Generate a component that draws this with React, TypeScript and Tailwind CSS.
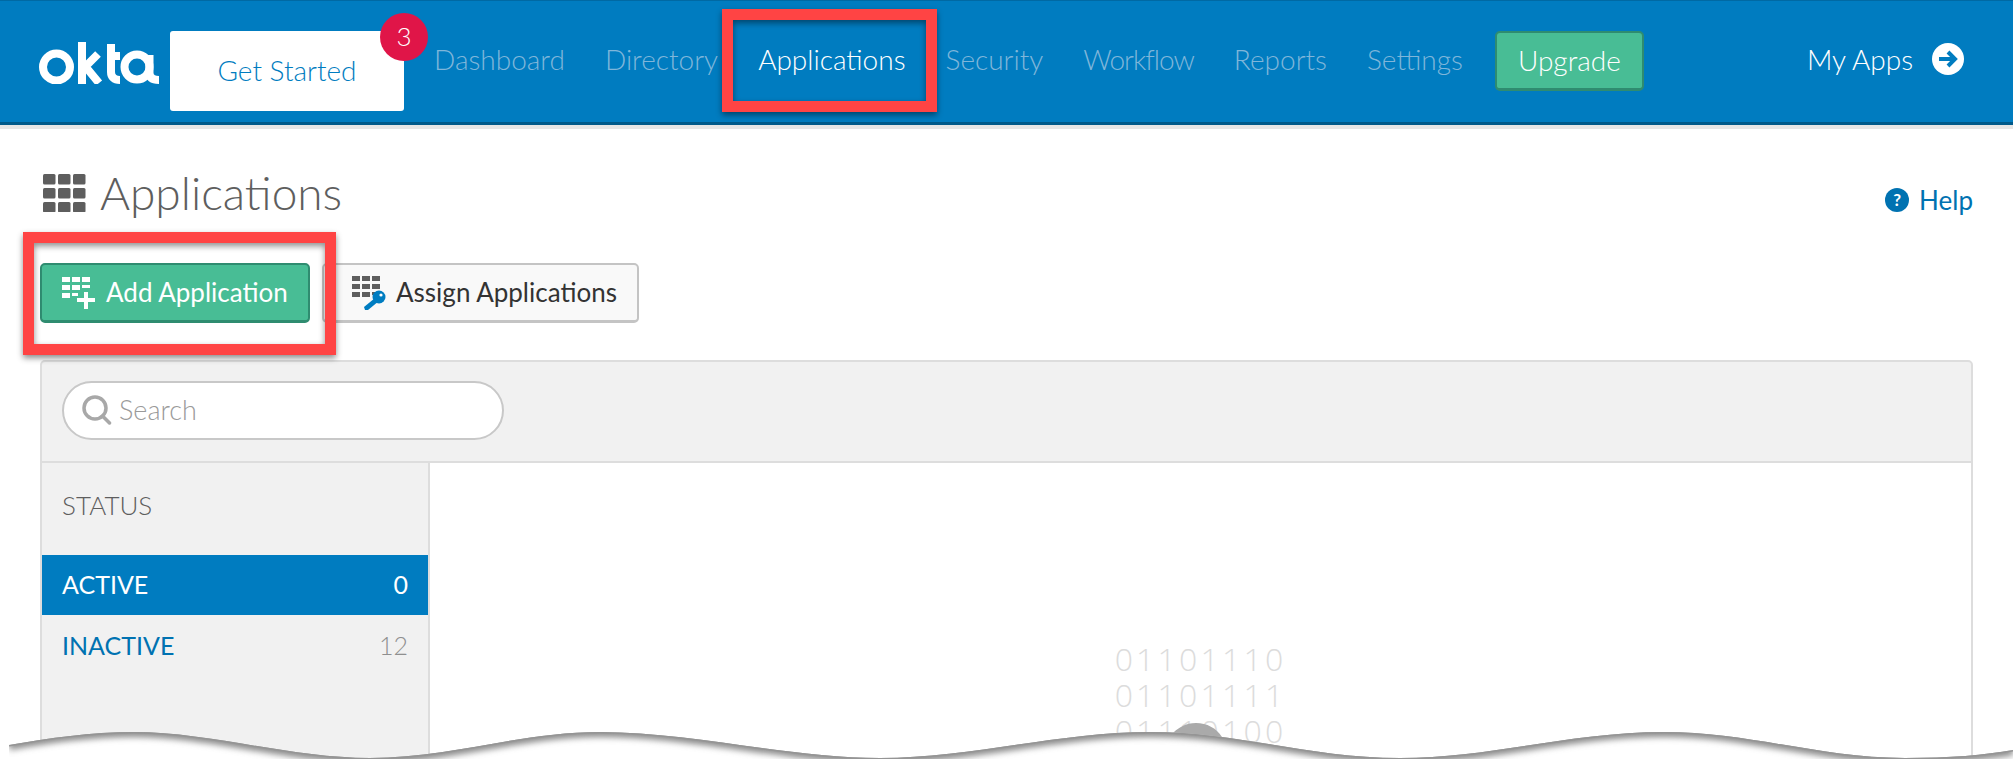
import React from "react";

const NAV_ITEMS = [
  { label: "Dashboard", className: "" },
  { label: "Directory", className: "" },
  { label: "Applications", className: "text-white" },
  { label: "Security", className: "" },
  { label: "Workflow", className: "tracking-[-1px]" },
  { label: "Reports", className: "" },
  { label: "Settings", className: "" },
];

const WAVE =
  "M9 745 C50 738 90 732 134 732 C210 732 290 758 370 758 C450 758 520 732 600 732 C690 732 790 758 880 758 C970 758 1060 732 1150 732 C1240 732 1310 758 1400 758 C1490 758 1570 732 1664 732 C1750 732 1820 758 1905 758 C1950 758 1985 755 2013 750";

function OktaLogo() {
  return (
    <svg width="121" height="42" viewBox="0 0 121 42" fill="none" stroke="white" strokeWidth="8">
      <circle cx="17.5" cy="25" r="13.5" />
      <path d="M43 0V42M44 27L59 12M46 24L60 41" />
      <path d="M68 14H81M72 2V30C72 35 75 38 81 38" />
      <circle cx="98" cy="25" r="12.5" />
      <path d="M110.5 13V31C110.5 36 114 38 120 38" />
    </svg>
  );
}

function GridIcon() {
  return (
    <svg width="43" height="38" viewBox="0 0 43 38" fill="#5e5e5e">
      {[0, 14, 28].map((y) =>
        [0, 15, 30].map((x) => <rect key={`${x}-${y}`} x={x} y={y} width="12.5" height="10.5" rx="1.5" />),
      )}
    </svg>
  );
}

function AddAppIcon() {
  return (
    <svg width="33" height="32" viewBox="0 0 33 32" fill="white">
      <rect x="0" y="0" width="8" height="5" />
      <rect x="10" y="0" width="8" height="5" />
      <rect x="20" y="0" width="8" height="5" />
      <rect x="0" y="8" width="8" height="5" />
      <rect x="10" y="8" width="8" height="5" />
      <rect x="20" y="8" width="8" height="3" />
      <rect x="0" y="16" width="8" height="5" />
      <rect x="10" y="16" width="6" height="3" />
      <path d="M22 15h4v6h7v4h-7v7h-4v-7h-7v-4h7z" />
    </svg>
  );
}

function AssignAppIcon() {
  return (
    <svg width="34" height="34" viewBox="0 0 34 34">
      <g fill="#5e5e5e">
        <rect x="0" y="0" width="8" height="5" />
        <rect x="10" y="0" width="8" height="5" />
        <rect x="20" y="0" width="8" height="5" />
        <rect x="0" y="8" width="8" height="5" />
        <rect x="10" y="8" width="8" height="5" />
        <rect x="20" y="8" width="8" height="5" />
        <rect x="0" y="16" width="8" height="5" />
        <rect x="10" y="16" width="8" height="5" />
        <rect x="20" y="16" width="4" height="3" />
      </g>
      <g fill="#007dc1">
        <circle cx="27" cy="21" r="6.5" />
        <path d="M23 22l4 3-11 9h-3l-1-3z" />
      </g>
      <circle cx="29" cy="19" r="1.6" fill="white" />
    </svg>
  );
}

function SearchIcon() {
  return (
    <svg width="30" height="30" viewBox="0 0 30 30" fill="none" stroke="#a8a8a8" strokeWidth="3.5">
      <circle cx="13" cy="13" r="11" />
      <path d="M20.5 21L27.5 28" strokeLinecap="round" />
    </svg>
  );
}

// torn paper edge along the bottom of the screenshot
function TornEdge() {
  return (
    <svg className="absolute left-0 top-0 pointer-events-none" width="2013" height="759" viewBox="0 0 2013 759">
      <defs>
        <clipPath id="below-edge">
          <path d={`${WAVE} V770 H9 Z`} />
        </clipPath>
        <filter id="edge-blur" x="-1%" y="-20%" width="102%" height="140%">
          <feGaussianBlur stdDeviation="3" />
        </filter>
      </defs>
      <path d="M1169 737 C1178 727 1186 723 1196 723 C1207 723 1216 728 1222 737 Z" fill="#aaaaaa" />
      <path d={`${WAVE} V770 H9 Z`} fill="white" />
      <g clipPath="url(#below-edge)">
        <path d={WAVE} fill="none" stroke="#8a8a8a" strokeWidth="10" filter="url(#edge-blur)" />
        <path d={WAVE} fill="none" stroke="#959595" strokeWidth="3" />
      </g>
    </svg>
  );
}

export default function App() {
  return (
    <div className="relative h-[759px] w-[2013px] overflow-hidden bg-white font-['Lato',sans-serif] font-light">
      <header className="flex h-[125px] items-center border-t border-t-[#0069a3] border-b-[3px] border-b-[#005a8a] bg-[#007cc0] pl-[39px]">
        <div className="mt-[3px]">
          <OktaLogo />
        </div>
        <div className="relative ml-[10px] mt-[19px] flex h-[80px] w-[234px] items-center justify-center rounded-[3px] bg-white pb-[3px] text-[28px] text-[#007cc0]">
          Get Started
          <span className="absolute -right-[24px] -top-[18px] flex h-[48px] w-[48px] items-center justify-center rounded-full bg-[#e01548] pb-[2px] text-[26px] text-white">
            3
          </span>
        </div>
        <nav className="-mt-[5px] ml-[30px] flex items-center gap-[40px] text-[28px] text-[#7fb6da]">
          {NAV_ITEMS.map((item) => (
            <span key={item.label} className={item.className}>
              {item.label}
            </span>
          ))}
        </nav>
        <button className="-mt-[2px] ml-[32px] h-[60px] w-[149px] rounded-[5px] border-[2px] border-[#2f8c70] border-b-[3px] bg-[#48bd95] text-[28px] text-white">
          Upgrade
        </button>
        <span className="-mt-[5px] ml-[163px] text-[28px] text-white">My Apps</span>
        <span className="-mt-[5px] ml-[19px] flex h-[32px] w-[32px] items-center justify-center rounded-full bg-white">
          <svg width="22" height="22" viewBox="0 0 22 22" fill="none" stroke="#007cc0" strokeWidth="4">
            <path d="M2 11H18M11 4L18 11L11 18" />
          </svg>
        </span>
      </header>
      <div className="h-[4px] bg-[#e6e6e6]" />

      <main className="px-[40px]">
        <div className="flex h-[134px] items-center justify-between">
          <div className="mt-[-7px] ml-[3px] flex items-center gap-[14px] text-[46px] text-[#5e5e5e]">
            <GridIcon />
            <h1>Applications</h1>
          </div>
          <a className="mt-[8px] flex items-center gap-[10px] text-[26px] font-normal text-[#0072b1]">
            <span className="flex h-[24px] w-[24px] items-center justify-center rounded-full bg-[#0072b1] text-[17px] font-bold text-white">
              ?
            </span>
            Help
          </a>
        </div>

        <div className="flex gap-[12px]">
          <button className="flex h-[60px] w-[270px] items-center gap-[11px] rounded-[5px] border-[2px] border-[#2f8c70] border-b-[3px] bg-[#48bd95] pl-[20px] text-[26px] font-normal text-white">
            <AddAppIcon />
            Add Application
          </button>
          <button className="flex h-[60px] w-[317px] items-center gap-[10px] rounded-[5px] border-[2px] border-[#c4c4c4] border-b-[3px] bg-[#f9f9f9] pl-[28px] text-[26px] font-normal text-[#333333]">
            <AssignAppIcon />
            Assign Applications
          </button>
        </div>

        <section className="mt-[37px] h-[420px] rounded-t-[5px] border-[2px] border-[#dddddd] bg-[#f1f1f1]">
          <div className="flex h-[101px] items-center border-b-[2px] border-[#dddddd] pb-[3px] pl-[20px]">
            <div className="flex h-[59px] w-[442px] items-center gap-[7px] rounded-full border-[2px] border-[#c8c8c8] bg-white pl-[18px] text-[27px] text-[#9a9a9a]">
              <SearchIcon />
              Search
            </div>
          </div>
          <div className="flex h-[320px]">
            <aside className="w-[388px] shrink-0 border-r-[2px] border-[#dddddd]">
              <div className="flex h-[92px] items-center pl-[20px] pb-[8px] text-[26px] text-[#5e5e5e]">STATUS</div>
              <div className="flex h-[60px] items-center justify-between bg-[#007cc0] px-[20px] text-[25px] font-normal text-white">
                <span>ACTIVE</span>
                <span>0</span>
              </div>
              <div className="flex h-[62px] items-center justify-between px-[20px] text-[25px] font-normal text-[#0072b1]">
                <span>INACTIVE</span>
                <span className="font-light text-[#8f8f8f]">12</span>
              </div>
            </aside>
            <div className="flex-1 bg-white pt-[178px] text-center font-['Open_Sans',sans-serif] text-[32px] leading-[36px] font-light tracking-[3.2px] text-[#dcdcdc]">
              <div>01101110</div>
              <div>01101111</div>
              <div>01110100</div>
            </div>
          </div>
        </section>
      </main>

      {/* annotation boxes drawn over the screenshot */}
      <div className="absolute left-[722px] top-[9px] h-[103px] w-[215px] border-[11px] border-[#ff4444] shadow-[0_3px_6px_rgba(0,0,0,0.45),inset_0_3px_6px_rgba(0,0,0,0.45)]" />
      <div className="absolute left-[23px] top-[232px] h-[123px] w-[313px] border-[11px] border-[#ff4444] shadow-[0_3px_6px_rgba(0,0,0,0.45),inset_0_3px_6px_rgba(0,0,0,0.45)]" />

      <TornEdge />
    </div>
  );
}
